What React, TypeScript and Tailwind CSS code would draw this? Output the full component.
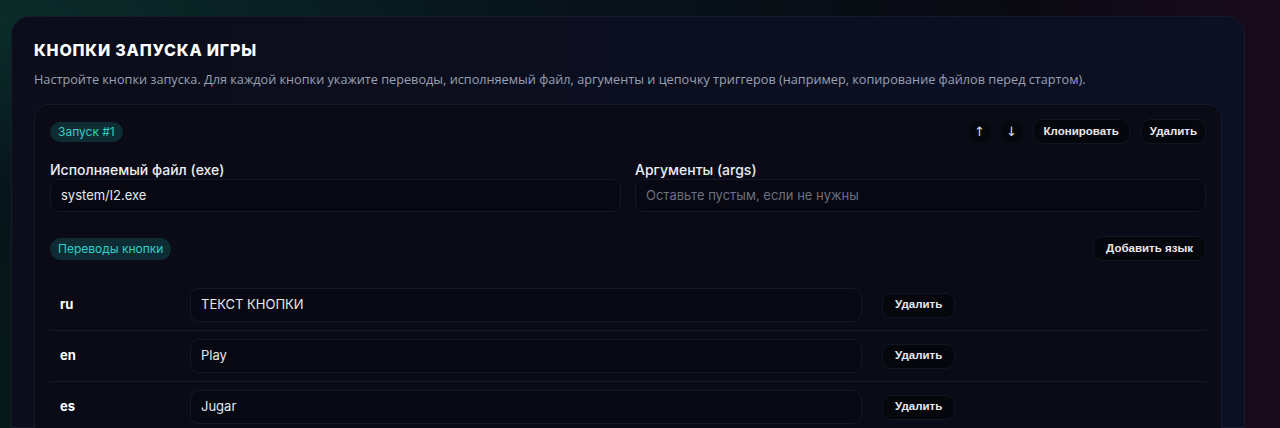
import { useState } from "react";

type Row = { lang: string; text: string };

const btn =
  "h-[25px] rounded-[9px] bg-[#06070c] border border-[#121522] text-[11.5px] font-bold text-[#e6e8ee] [font-family:'Liberation_Sans',Arial,sans-serif]";

export default function App() {
  const [rows] = useState<Row[]>([
    { lang: "ru", text: "ТЕКСТ КНОПКИ" },
    { lang: "en", text: "Play" },
    { lang: "es", text: "Jugar" },
  ]);

  return (
    <div className="h-[428px] overflow-hidden bg-[radial-gradient(ellipse_at_0%_5%,#0b2c2a_0%,#07141a_30%,transparent_60%),linear-gradient(90deg,#071a1a,#07090f_20%,#0a0812_80%,#1a0b1d)] [font-family:Inter,'Noto_Sans',sans-serif] text-[#e8eaf0]">
      <div className="flex h-full">
        <div className="ml-[11px] mt-[16px] w-[1234px] rounded-t-[18px] border border-[#171b2b] bg-gradient-to-r from-[#0b0d1a] to-[#0c1024] px-[22px] pt-[21px]">
          <h2 className="text-[16px] font-extrabold uppercase tracking-[0.05em] text-white">
            Кнопки запуска игры
          </h2>
          <p className="mt-[8px] text-[12.7px] text-[#9aa0b2] [font-family:'Open_Sans',sans-serif]">
            Настройте кнопки запуска. Для каждой кнопки укажите переводы, исполняемый файл, аргументы и цепочку триггеров (например, копирование файлов перед стартом).
          </p>

          <div className="mt-[15px] rounded-t-[14px] border border-[#151929] bg-[#0a0b17] px-[15px] pt-[14px] pb-4">
            <div className="flex items-center justify-between">
              <span className="rounded-full bg-[#0d2c33] px-[8px] py-[1px] text-[12px] text-[#34cdc7]">
                Запуск #1
              </span>
              <div className="flex items-center gap-[10px]">
                <button className="flex h-[22px] w-[22px] items-center justify-center rounded-full bg-[#06070c] text-[13px] text-[#d8dbe4] [font-family:'DejaVu_Sans',sans-serif]">↑</button>
                <button className="flex h-[22px] w-[22px] items-center justify-center rounded-full bg-[#06070c] text-[13px] text-[#d8dbe4] [font-family:'DejaVu_Sans',sans-serif]">↓</button>
                <button className={btn + " px-[10px]"}>Клонировать</button>
                <button className={btn + " ml-[1px] px-[8px]"}>Удалить</button>
              </div>
            </div>

            <div className="mt-[17px] grid grid-cols-2 gap-[14px]">
              <div>
                <div className="text-[14px] leading-[18px] font-medium text-[#eceef3]">Исполняемый файл (exe)</div>
                <div className="flex h-[33px] items-center rounded-[9px] border border-[#141828] bg-[#070811] px-[10px] text-[13px] text-[#e6e8ee]">
                  system/l2.exe
                </div>
              </div>
              <div>
                <div className="text-[14px] leading-[18px] font-medium text-[#eceef3]">Аргументы (args)</div>
                <div className="flex h-[33px] items-center rounded-[9px] border border-[#141828] bg-[#070811] px-[10px] text-[13px] text-[#6b7080]">
                  Оставьте пустым, если не нужны
                </div>
              </div>
            </div>

            <div className="mt-[24px] flex items-center justify-between">
              <span className="rounded-full bg-[#0d2c33] px-[8px] py-[2px] text-[12px] text-[#34cdc7]">
                Переводы кнопки
              </span>
              <button className={btn + " px-[12px]"}>Добавить язык</button>
            </div>

            <div className="mt-[19px]">
              {rows.map((r, i) => (
                <div
                  key={r.lang}
                  className={
                    "flex items-center py-[8px] pl-[10px] " +
                    (i < rows.length - 1 ? "border-b border-[#161a29]" : "")
                  }
                >
                  <div className="w-[130px] text-[13px] font-bold text-white">{r.lang}</div>
                  <div className="flex h-[34px] w-[672px] items-center rounded-[9px] border border-[#141828] bg-[#070811] px-[10px] text-[13px] text-[#e6e8ee]">
                    {r.text}
                  </div>
                  <button className={btn + " ml-[20px] px-[12px]"}>Удалить</button>
                </div>
              ))}
            </div>
          </div>
        </div>
      </div>
    </div>
  );
}
